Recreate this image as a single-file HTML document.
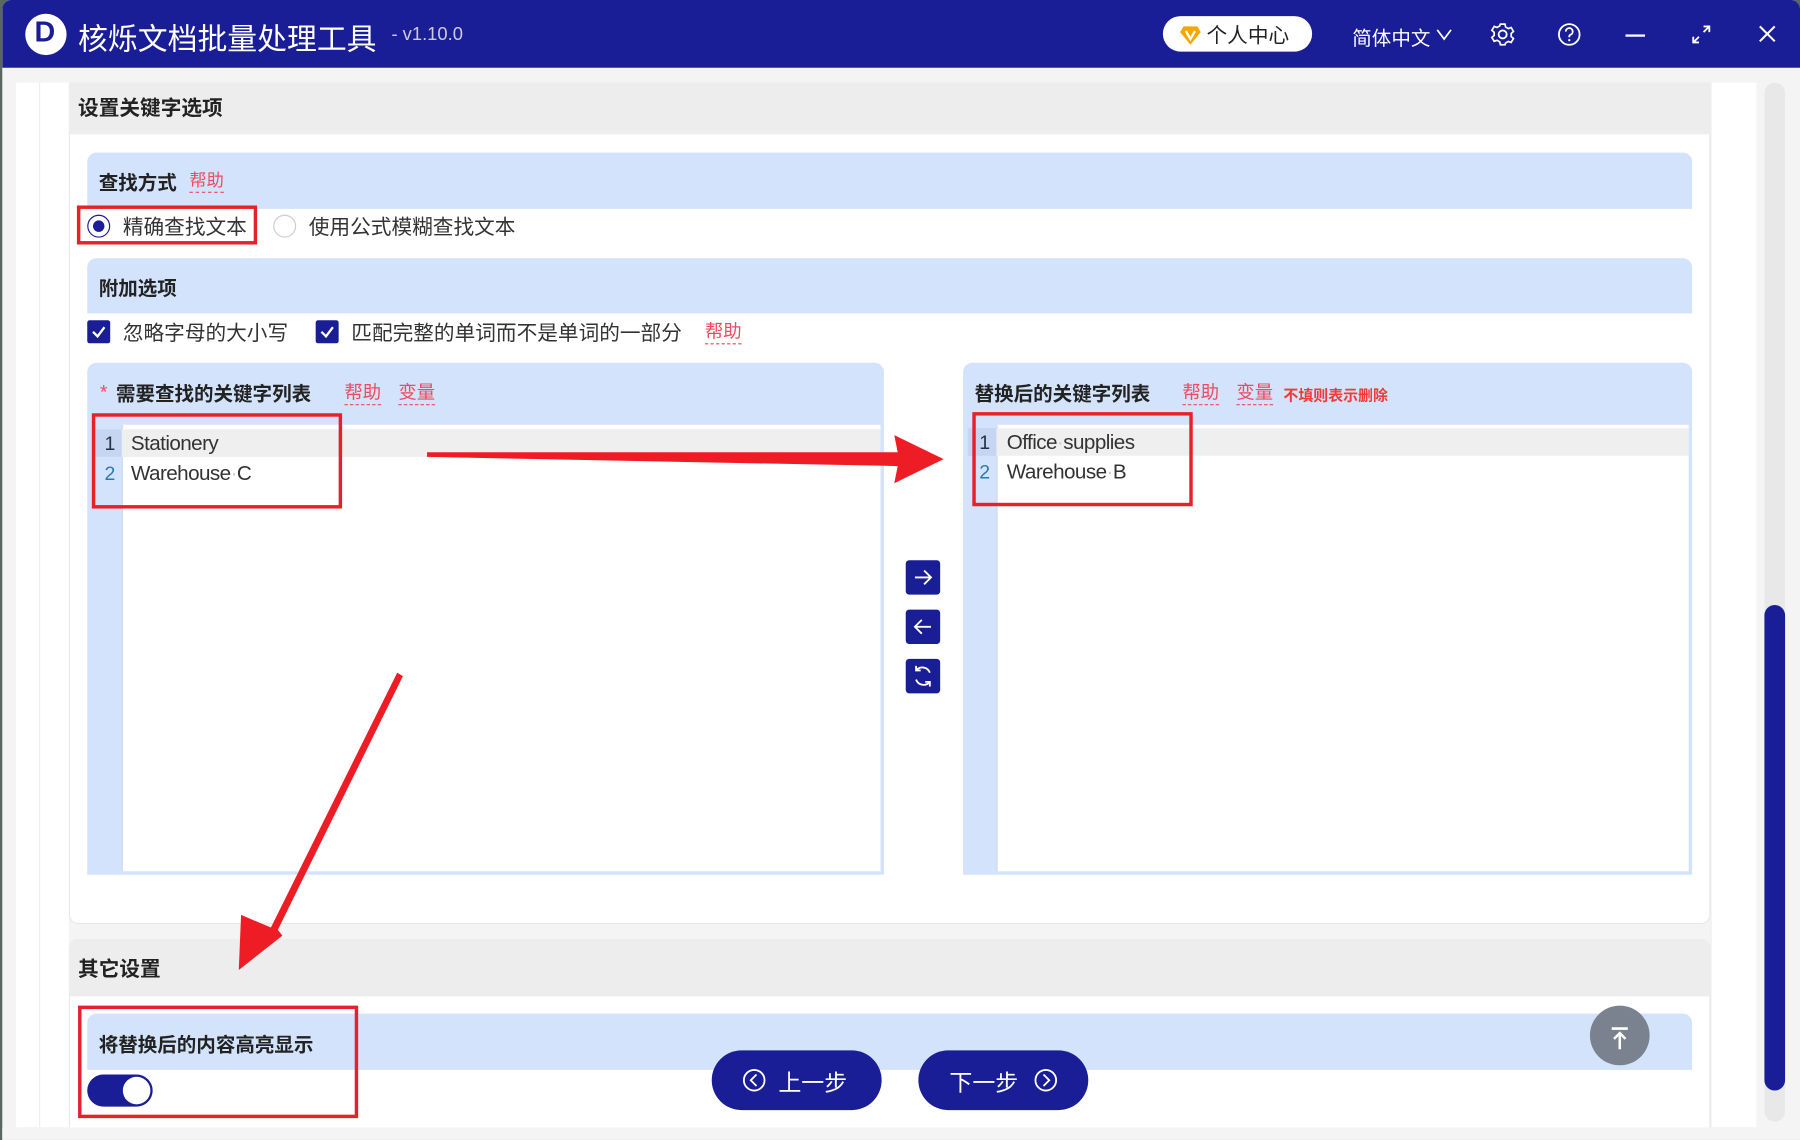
<!DOCTYPE html>
<html><head><meta charset="utf-8"><style>
*{margin:0;padding:0;box-sizing:border-box}
html,body{width:1800px;height:1140px;overflow:hidden;background:#5a6660}
#s{position:absolute;left:0;top:0;width:1568px;height:993px;transform:scale(1.147959);transform-origin:0 0;font-family:"Liberation Sans","Noto Sans CJK SC",sans-serif;}
.a{position:absolute}
.win{left:2px;top:0;width:1566px;height:993px;background:#f4f4f4;border-radius:8px 8px 0 0;overflow:hidden}
.tb{left:0;top:0;width:1566px;height:59px;background:#1a1e96}
.band{background:#d3e3fb;border-radius:8px 8px 0 0}
.h{font-weight:bold;font-size:17px;color:#222}
.help{color:#f04a5e;font-size:16px;border-bottom:1px dashed #f04a5e;line-height:18px}
.t18{font-size:18px;color:#333}
.cb{width:20px;height:20px;background:#1a1e96;border-radius:2px}
.redbox{border:3px solid #e8202a}
.btn{width:30px;height:30px;background:#1a1e96;border-radius:3px}
.ln{font-size:17px;color:#2a7ab0}
.code{font-size:18px;color:#333;letter-spacing:-0.5px}
</style></head><body><div id="s">
<div class="a win">
 <div class="a tb"></div>
</div>
<div class="a" style="left:22px;top:12px;width:36px;height:36px;border-radius:50%;background:#fff"></div>
<div class="a" style="left:30px;top:14px;font-size:25px;font-weight:bold;color:#1a1e96">D</div>
<div class="a" style="left:68px;top:14px;font-size:26px;color:#fff;white-space:nowrap">核烁文档批量处理工具</div>
<div class="a" style="left:341px;top:22px;font-size:16px;color:#ccd;white-space:nowrap">- v1.10.0</div>
<div class="a" style="left:1013px;top:14px;width:130px;height:31px;border-radius:16px;background:#fff"></div>
<svg class="a" style="left:1028px;top:21px" width="18" height="18" viewBox="0 0 18 18"><path d="M3 2h12l3 5-9 11-9-11z" fill="#f5a700"/><path d="M5 6l4 7 4-7" stroke="#fff" stroke-width="2" fill="none"/></svg>
<div class="a" style="left:1051px;top:17px;font-size:18px;color:#222">个人中心</div>
<div class="a" style="left:1178px;top:19px;font-size:17px;color:#fff">简体中文</div>
<svg class="a" style="left:1250px;top:24px" width="16" height="12"><path d="M2 2l6 8 6-8" stroke="#fff" stroke-width="1.5" fill="none"/></svg>
<svg class="a" style="left:1298px;top:19px" width="22" height="22" viewBox="0 0 22 22"><circle cx="11" cy="11" r="3.5" stroke="#fff" stroke-width="1.6" fill="none"/><path d="M9 2h4l.6 2.6 2.3 1.3 2.5-.9 2 3.4-2 1.8v2.6l2 1.8-2 3.4-2.5-.9-2.3 1.3L13 20H9l-.6-2.6-2.3-1.3-2.5.9-2-3.4 2-1.8V9.2l-2-1.8 2-3.4 2.5.9 2.3-1.3z" stroke="#fff" stroke-width="1.5" fill="none"/></svg>
<svg class="a" style="left:1356px;top:19px" width="22" height="22"><circle cx="11" cy="11" r="9" stroke="#fff" stroke-width="1.6" fill="none"/><path d="M8 8.5a3 3 0 1 1 4 2.8c-1 .4-1 1-1 2.2" stroke="#fff" stroke-width="1.6" fill="none"/><circle cx="11" cy="16" r="1" fill="#fff"/></svg>
<div class="a" style="left:1416px;top:30px;width:17px;height:2px;background:#fff"></div>
<svg class="a" style="left:1473px;top:21px" width="18" height="18"><path d="M11 2h5v5M16 2l-5 5M7 16H2v-5M2 16l5-5" stroke="#fff" stroke-width="1.6" fill="none"/></svg>
<svg class="a" style="left:1531px;top:21px" width="17" height="17"><path d="M2 2l13 13M15 2L2 15" stroke="#fff" stroke-width="1.8"/></svg>
<div class="a" style="left:14px;top:72px;width:46px;height:910px;background:#fff"></div>
<div class="a" style="left:34px;top:72px;width:1px;height:910px;background:#eee"></div>
<div class="a" style="left:60px;top:72px;width:1430px;height:733px;background:#fff;border:1px solid #e8e8e8;border-radius:0 0 8px 8px"></div>
<div class="a" style="left:60px;top:72px;width:1430px;height:45px;background:#ededed"></div>
<div class="a h" style="left:68px;top:80px;font-size:18px">设置关键字选项</div>
<div class="a" style="left:1490px;top:72px;width:40px;height:910px;background:#fff;border-left:1px solid #eee"></div>
<div class="a" style="left:1537px;top:72px;width:18px;height:905px;background:#e8e8e8;border-radius:9px"></div>
<div class="a" style="left:1537px;top:527px;width:18px;height:423px;background:#1a1e96;border-radius:9px"></div>
<div class="a band" style="left:76px;top:133px;width:1398px;height:49px"></div>
<div class="a h" style="left:86px;top:145px">查找方式</div>
<div class="a help" style="left:165px;top:149px;font-size:15px">帮助</div>
<div class="a redbox" style="left:67px;top:179px;width:157px;height:34px"></div>
<div class="a" style="left:76px;top:187px;width:20px;height:20px;border-radius:50%;border:1.5px solid #1a1e96"></div>
<div class="a" style="left:81px;top:192px;width:10px;height:10px;border-radius:50%;background:#1a1e96"></div>
<div class="a t18" style="left:107px;top:184px">精确查找文本</div>
<div class="a" style="left:238px;top:187px;width:20px;height:20px;border-radius:50%;border:1px solid #ccc"></div>
<div class="a t18" style="left:269px;top:184px">使用公式模糊查找文本</div>
<div class="a band" style="left:76px;top:225px;width:1398px;height:48px"></div>
<div class="a h" style="left:86px;top:237px">附加选项</div>
<div class="a cb" style="left:76px;top:279px"></div>
<svg class="a" style="left:76px;top:279px" width="20" height="20"><path d="M5 10l4 4 6-8" stroke="#fff" stroke-width="2" fill="none"/></svg>
<div class="a t18" style="left:107px;top:276px">忽略字母的大小写</div>
<div class="a cb" style="left:275px;top:279px"></div>
<svg class="a" style="left:275px;top:279px" width="20" height="20"><path d="M5 10l4 4 6-8" stroke="#fff" stroke-width="2" fill="none"/></svg>
<div class="a t18" style="left:306px;top:276px">匹配完整的单词而不是单词的一部分</div>
<div class="a help" style="left:614px;top:281px;font-size:16px">帮助</div>
<div class="a band" style="left:76px;top:316px;width:694px;height:446px"></div>
<div class="a" style="left:87px;top:332px;color:#f04a5e;font-size:17px">*</div>
<div class="a h" style="left:101px;top:329px">需要查找的关键字列表</div>
<div class="a help" style="left:300px;top:334px">帮助</div>
<div class="a help" style="left:347px;top:334px">变量</div>
<div class="a" style="left:106px;top:370px;width:661px;height:389px;background:#fff;border-left:1px solid #c8d6ee"></div>
<div class="a" style="left:106px;top:374px;width:661px;height:24px;background:#efefef"></div>
<div class="a" style="left:80px;top:374px;width:26px;height:24px;background:#c6d6f2"></div>
<div class="a ln" style="left:91px;top:377px;color:#234">1</div>
<div class="a code" style="left:114px;top:376px">Stationery</div>
<div class="a ln" style="left:91px;top:403px">2</div>
<div class="a code" style="left:114px;top:402px">Warehouse<span style="color:#ccc">·</span>C</div>
<div class="a redbox" style="left:80px;top:360px;width:218px;height:83px"></div>
<div class="a band" style="left:839px;top:316px;width:635px;height:446px"></div>
<div class="a h" style="left:849px;top:329px">替换后的关键字列表</div>
<div class="a help" style="left:1030px;top:334px">帮助</div>
<div class="a help" style="left:1077px;top:334px">变量</div>
<div class="a" style="left:1118px;top:334px;color:#f03a3a;font-size:13px;font-weight:bold">不填则表示删除</div>
<div class="a" style="left:868px;top:370px;width:603px;height:389px;background:#fff;border-left:1px solid #c8d6ee"></div>
<div class="a" style="left:868px;top:373px;width:603px;height:24px;background:#efefef"></div>
<div class="a" style="left:843px;top:373px;width:25px;height:24px;background:#c6d6f2"></div>
<div class="a ln" style="left:853px;top:376px;color:#234">1</div>
<div class="a code" style="left:877px;top:375px">Office<span style="color:#ccc">·</span>supplies</div>
<div class="a ln" style="left:853px;top:402px">2</div>
<div class="a code" style="left:877px;top:401px">Warehouse<span style="color:#ccc">·</span>B</div>
<div class="a redbox" style="left:847px;top:359px;width:192px;height:82px"></div>
<div class="a btn" style="left:789px;top:488px"></div>
<svg class="a" style="left:789px;top:488px" width="30" height="30"><path d="M8 15h14M16 9l6 6-6 6" stroke="#fff" stroke-width="1.6" fill="none"/></svg>
<div class="a btn" style="left:789px;top:531px"></div>
<svg class="a" style="left:789px;top:531px" width="30" height="30"><path d="M22 15H8M14 9l-6 6 6 6" stroke="#fff" stroke-width="1.6" fill="none"/></svg>
<div class="a btn" style="left:789px;top:574px"></div>
<svg class="a" style="left:789px;top:574px" width="30" height="30"><path d="M21 12a7 7 0 0 0-12-2M9 18a7 7 0 0 0 12 2" stroke="#fff" stroke-width="1.6" fill="none"/><path d="M9 6v4h4M21 24v-4h-4" stroke="#fff" stroke-width="1.6" fill="none"/></svg>
<div class="a" style="left:60px;top:818px;width:1430px;height:170px;background:#fff;border:1px solid #e8e8e8;border-radius:8px 8px 0 0"></div>
<div class="a" style="left:60px;top:818px;width:1430px;height:50px;background:#ededed;border-radius:8px 8px 0 0"></div>
<div class="a h" style="left:68px;top:830px;font-size:18px">其它设置</div>
<div class="a band" style="left:76px;top:883px;width:1398px;height:49px"></div>
<div class="a h" style="left:86px;top:896px">将替换后的内容高亮显示</div>
<div class="a" style="left:76px;top:936px;width:57px;height:28px;border-radius:14px;background:#1a1e96"></div>
<div class="a" style="left:107px;top:938px;width:24px;height:24px;border-radius:50%;background:#fff"></div>
<div class="a redbox" style="left:68px;top:876px;width:244px;height:98px"></div>
<div class="a" style="left:620px;top:915px;width:148px;height:52px;border-radius:26px;background:#1a1e96"></div>
<svg class="a" style="left:646px;top:930px" width="22" height="22"><circle cx="11" cy="11" r="9" stroke="#fff" stroke-width="1.6" fill="none"/><path d="M13 6l-5 5 5 5" stroke="#fff" stroke-width="1.6" fill="none"/></svg>
<div class="a" style="left:678px;top:927px;color:#fff;font-size:20px">上一步</div>
<div class="a" style="left:800px;top:915px;width:148px;height:52px;border-radius:26px;background:#1a1e96"></div>
<div class="a" style="left:827px;top:927px;color:#fff;font-size:20px">下一步</div>
<svg class="a" style="left:900px;top:930px" width="22" height="22"><circle cx="11" cy="11" r="9" stroke="#fff" stroke-width="1.6" fill="none"/><path d="M9 6l5 5-5 5" stroke="#fff" stroke-width="1.6" fill="none"/></svg>
<div class="a" style="left:1385px;top:876px;width:52px;height:52px;border-radius:50%;background:#7a8290"></div>
<svg class="a" style="left:1385px;top:876px" width="52" height="52"><path d="M19 20h14M26 38V24M21 29l5-5 5 5" stroke="#fff" stroke-width="2.2" fill="none"/></svg>
<div class="a" style="left:2px;top:982px;width:1566px;height:11px;background:#f4f4f4"></div>
<svg class="a" style="left:0;top:0" width="1568" height="993">
<polygon points="372,394 782,394 779,379 822,400 779,421 782,406 372,398" fill="#ee1c25"/>
<polygon points="346,586 351,589 242,810 246,815 208,845 210,797 236,808" fill="#ee1c25"/>
</svg>
</div></body></html>
